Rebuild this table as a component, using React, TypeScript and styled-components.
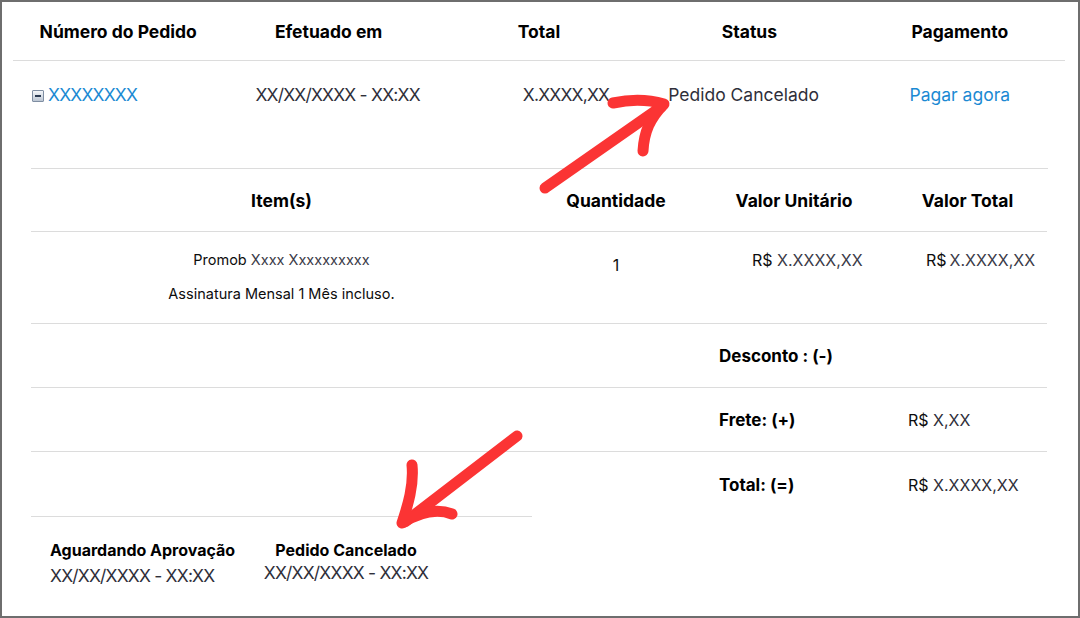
import React from "react";
import styled, { createGlobalStyle } from "styled-components";

const Global = createGlobalStyle`
  * { box-sizing: border-box; }
  body {
    margin: 0;
    background: #fff;
    font-family: Inter, "Liberation Sans", Arial, sans-serif;
  }
`;

const Frame = styled.div`
  position: relative;
  width: 1080px;
  height: 618px;
  border: 2px solid #6e6e6e;
  background: #fff;
  padding: 0 13px 0 11px;
  overflow: hidden;
`;

const OrderGrid = styled.div`
  display: grid;
  grid-template-columns: repeat(5, 1fr);
`;

const HeadCell = styled.div`
  height: 59px;
  display: flex;
  align-items: center;
  justify-content: center;
  font-size: 17.5px;
  font-weight: 700;
  color: #000;
  border-bottom: 1px solid #dcdcdc;
`;

const Cell = styled.div<{ $pad?: number; $center?: boolean }>`
  height: 107px;
  padding-top: 24px;
  padding-left: ${(p) => (p.$center ? 0 : p.$pad ?? 0)}px;
  display: flex;
  align-items: flex-start;
  justify-content: ${(p) => (p.$center ? "center" : "flex-start")};
  font-size: 17.5px;
  line-height: 20px;
  color: #2f2f3a;
`;

// placeholder "X" strings are narrower in the original font
const Xs = styled.span`
  letter-spacing: -0.8px;
`;

const Link = styled.a`
  color: #1b8ad3;
  text-decoration: none;
`;

const Toggle = styled.span`
  display: inline-block;
  position: relative;
  width: 12px;
  height: 12px;
  margin: 5px 4px 0 0;
  border: 1px solid #7f8ea2;
  border-radius: 1px;
  background: linear-gradient(#f4f6f9, #bcc6d3);
  &::after {
    content: "";
    position: absolute;
    left: 2px;
    right: 2px;
    top: 4px;
    height: 2px;
    background: #2b3a52;
  }
`;

const Detail = styled.div`
  grid-column: 1 / -1;
  padding: 0 17px 0 18px;
`;

const ItemGrid = styled.div`
  display: grid;
  grid-template-columns: 501px 168px 188px 159px;
  border-top: 1px solid #dcdcdc;
`;

const ItemHead = styled.div`
  height: 63px;
  display: flex;
  align-items: center;
  justify-content: center;
  font-size: 17.5px;
  font-weight: 700;
  color: #000;
  border-bottom: 1px solid #dcdcdc;
`;

const ItemCell = styled.div<{ $pad?: number; $top?: number; $center?: boolean }>`
  height: 92px;
  padding-top: ${(p) => p.$top ?? 19}px;
  padding-left: ${(p) => p.$pad ?? 0}px;
  display: flex;
  flex-direction: column;
  align-items: ${(p) => (p.$center ? "center" : "flex-start")};
  font-size: 16px;
  line-height: 18px;
  color: #0d0d0d;
  border-bottom: 1px solid #dcdcdc;
`;

const ItemLine = styled.div<{ $gap?: number }>`
  font-size: 14.5px;
  line-height: 18px;
  margin-top: ${(p) => p.$gap ?? 0}px;
  color: #0d0d0d;
`;

const Muted = styled.span`
  color: #3b3b48;
`;

const SumCell = styled.div<{ $pad?: number; $line?: boolean }>`
  height: 64px;
  padding-left: ${(p) => p.$pad ?? 0}px;
  padding-top: 1px;
  display: flex;
  align-items: center;
  font-size: 16px;
  color: #2f2f3a;
  border-bottom: ${(p) => (p.$line ? "1px solid #dcdcdc" : "none")};
`;

const SumLabel = styled.span`
  font-size: 17px;
  font-weight: 700;
  color: #000;
`;

const Currency = styled.span`
  color: #0d0d0d;
`;

const History = styled.div`
  width: 501px;
  border-top: 1px solid #dcdcdc;
  display: flex;
  padding: 24px 0 0 19px;
`;

const Step = styled.div<{ $center?: boolean; $w: number; $gap: number }>`
  width: ${(p) => p.$w}px;
  display: flex;
  flex-direction: column;
  align-items: ${(p) => (p.$center ? "center" : "flex-start")};
  gap: ${(p) => p.$gap}px;
`;

const StepTitle = styled.div`
  font-size: 16px;
  font-weight: 700;
  color: #000;
  line-height: 18px;
`;

const StepDate = styled.div`
  font-size: 17.5px;
  line-height: 20px;
  color: #2f2f3a;
`;

const Marks = styled.svg`
  position: absolute;
  left: -2px;
  top: -2px;
  pointer-events: none;
`;

const heads = ["Número do Pedido", "Efetuado em", "Total", "Status", "Pagamento"];

const App = () => {
  return (
    <>
      <Global />
      <Frame>
        <OrderGrid>
          {heads.map((h) => (
            <HeadCell key={h}>{h}</HeadCell>
          ))}

          <Cell $pad={19}>
            <Toggle />
            <Link href="#">
              <Xs>XXXXXXXX</Xs>
            </Link>
          </Cell>
          <Cell $pad={32}>
            <Xs>XX/XX/XXXX - XX:XX</Xs>
          </Cell>
          <Cell $pad={89}>
            <Xs>X.XXXX,XX</Xs>
          </Cell>
          <Cell $pad={24}>Pedido Cancelado</Cell>
          <Cell $center>
            <Link href="#">Pagar agora</Link>
          </Cell>

          <Detail>
            <ItemGrid>
              <ItemHead>Item(s)</ItemHead>
              <ItemHead>Quantidade</ItemHead>
              <ItemHead>Valor Unitário</ItemHead>
              <ItemHead>Valor Total</ItemHead>

              <ItemCell $center>
                <ItemLine>
                  Promob<Muted> Xxxx Xxxxxxxxxx</Muted>
                </ItemLine>
                <ItemLine $gap={16}>Assinatura Mensal 1 Mês incluso.</ItemLine>
              </ItemCell>
              <ItemCell $center $top={24}>1</ItemCell>
              <ItemCell $pad={52}>
                <span>
                  R$ <Muted>X.XXXX,XX</Muted>
                </span>
              </ItemCell>
              <ItemCell $pad={38}>
                <span>
                  R$&#8201;<Muted>X.XXXX,XX</Muted>
                </span>
              </ItemCell>

              <SumCell $line />
              <SumCell $line />
              <SumCell $line $pad={19}>
                <SumLabel>Desconto : (-)</SumLabel>
              </SumCell>
              <SumCell $line />

              <SumCell $line />
              <SumCell $line />
              <SumCell $line $pad={19}>
                <SumLabel>Frete: (+)</SumLabel>
              </SumCell>
              <SumCell $line $pad={20}>
                <span>
                  <Currency>R$</Currency> X,XX
                </span>
              </SumCell>

              <SumCell />
              <SumCell />
              <SumCell $pad={19}>
                <SumLabel>Total: (=)</SumLabel>
              </SumCell>
              <SumCell $pad={20}>
                <span>
                  <Currency>R$</Currency> X.XXXX,XX
                </span>
              </SumCell>
            </ItemGrid>

            <History>
              <Step $w={196} $gap={7}>
                <StepTitle>Aguardando Aprovação</StepTitle>
                <StepDate>
                  <Xs>XX/XX/XXXX - XX:XX</Xs>
                </StepDate>
              </Step>
              <Step $w={200} $gap={4} $center>
                <StepTitle>Pedido Cancelado</StepTitle>
                <StepDate>
                  <Xs>XX/XX/XXXX - XX:XX</Xs>
                </StepDate>
              </Step>
            </History>
          </Detail>
        </OrderGrid>

        <Marks width="1080" height="618" viewBox="0 0 1080 618">
          <g fill="none" stroke="#fb3434" strokeWidth="11" strokeLinecap="round" strokeLinejoin="round">
            <path d="M545 188 C585 160 625 132 661 107" />
            <path d="M613 103 C632 99 650 100 664 104 C650 118 644 132 643 151" />
            <path d="M517 436 C478 466 440 495 405 522" />
            <path d="M412 465 C414 485 408 505 402 523 C420 512 436 508 452 514" />
          </g>
        </Marks>
      </Frame>
    </>
  );
};

export default App;
